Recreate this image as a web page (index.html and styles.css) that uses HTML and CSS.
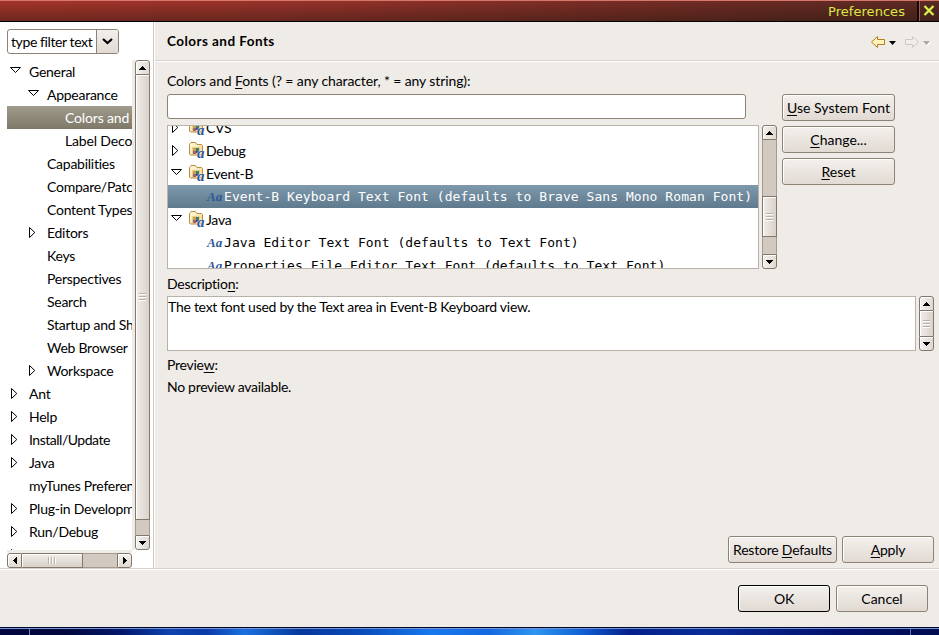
FILE: index.html
```html
<!DOCTYPE html>
<html lang="en">
<head>
<meta charset="utf-8">
<title>Preferences</title>
<link rel="stylesheet" href="styles.css">
</head>
<body>
<svg class="defs" width="0" height="0">
  <defs>
    <symbol id="open" viewBox="0 0 11 7"><path d="M.5 .5H10.5L5.5 5.5Z" fill="#fff" stroke="#000"/></symbol>
    <symbol id="shut" viewBox="0 0 7 11"><path d="M.5 .5V10.5L5.8 5.5Z" fill="#fff" stroke="#000"/></symbol>
    <symbol id="up" viewBox="0 0 7 4"><path d="M3 0h1v1h1v1h1v1h1v1H0V3h1V2h1V1h1z"/></symbol>
    <symbol id="down" viewBox="0 0 7 4"><path d="M3 4h1V3h1V2h1V1h1V0H0v1h1v1h1v1h1z"/></symbol>
    <symbol id="left" viewBox="0 0 4 7"><path d="M0 3v1h1v1h1v1h1v1h1V0H3v1H2v1H1v1z"/></symbol>
    <symbol id="right" viewBox="0 0 4 7"><path d="M4 3v1H3v1H2v1H1v1H0V0h1v1h1v1h1v1z"/></symbol>
    <linearGradient id="gold" x2="1" y2="1"><stop stop-color="#fffbe4"/><stop offset="1" stop-color="#f5d583"/></linearGradient>
    <symbol id="folder" viewBox="0 0 16 16">
      <path d="M.5 12V2.500L2 .5h4.500L8 2.500h4.500l1 1V12l-1 1h-11z" fill="url(#gold)" stroke="#b98b3c"/>
      <path d="M3 5h8v7H3z" fill="#e9cf8e"/>
      <path d="M4 6h3v3H4z" fill="#c9a04e"/><path d="M7 6h3v4H7z" fill="#3d7b78"/><path d="M4 9h3v3H4z" fill="#9b6377"/><path d="M7 9h2v2H7z" fill="#35508c"/>
    </symbol>
  </defs>
</svg>
<div class="window">
  <header class="titlebar"><span class="caption">Preferences</span><span class="close"><svg width="12" height="11" viewBox="0 0 12 11"><path d="M1.500 1L10.500 10M10.500 1L1.500 10" stroke="#dbf24a" stroke-width="2.200"/></svg></span></header>
  <main class="body">
    <aside class="nav">
      <div class="filter"><span>type filter text</span><b><svg width="11" height="7" viewBox="0 0 11 7"><path d="M1 1L5.500 5L10 1" fill="none" stroke="#000" stroke-width="2.200"/></svg></b></div>
      <div class="navgrid">
        <ul class="tree">
          <li class="l0"><i><svg width="11" height="7"><use href="#open"/></svg></i><span>General</span></li>
          <li class="l1"><i><svg width="11" height="7"><use href="#open"/></svg></i><span>Appearance</span></li>
          <li class="l2 current"><i></i><span class="wide">Colors and Fonts</span></li>
          <li class="l2"><i></i><span class="wide">Label Decorations</span></li>
          <li class="l1"><i></i><span>Capabilities</span></li>
          <li class="l1"><i></i><span>Compare/Patch</span></li>
          <li class="l1"><i></i><span>Content Types</span></li>
          <li class="l1"><i class="s"><svg width="7" height="11"><use href="#shut"/></svg></i><span>Editors</span></li>
          <li class="l1"><i></i><span>Keys</span></li>
          <li class="l1"><i></i><span>Perspectives</span></li>
          <li class="l1"><i></i><span>Search</span></li>
          <li class="l1"><i></i><span>Startup and Shutdown</span></li>
          <li class="l1"><i></i><span>Web Browser</span></li>
          <li class="l1"><i class="s"><svg width="7" height="11"><use href="#shut"/></svg></i><span>Workspace</span></li>
          <li class="l0"><i class="s"><svg width="7" height="11"><use href="#shut"/></svg></i><span>Ant</span></li>
          <li class="l0"><i class="s"><svg width="7" height="11"><use href="#shut"/></svg></i><span>Help</span></li>
          <li class="l0"><i class="s"><svg width="7" height="11"><use href="#shut"/></svg></i><span class="tight">Install/Update</span></li>
          <li class="l0"><i class="s"><svg width="7" height="11"><use href="#shut"/></svg></i><span>Java</span></li>
          <li class="l0"><i></i><span>myTunes Preferences</span></li>
          <li class="l0"><i class="s"><svg width="7" height="11"><use href="#shut"/></svg></i><span>Plug-in Development</span></li>
          <li class="l0"><i class="s"><svg width="7" height="11"><use href="#shut"/></svg></i><span>Run/Debug</span></li>
          <li class="l0"><i class="s"><svg width="7" height="11"><use href="#shut"/></svg></i></li>
        </ul>
        <div class="scroll v navv"><b><svg width="7" height="4"><use href="#up"/></svg></b><em class="thumb"><u></u></em><s></s><b><svg width="7" height="4"><use href="#down"/></svg></b></div>
        <div class="scroll h"><b><svg width="4" height="7"><use href="#left"/></svg></b><em class="thumb"><u></u></em><s></s><b><svg width="4" height="7"><use href="#right"/></svg></b></div>
      </div>
    </aside>
    <section class="page">
      <div class="heading"><h1>Colors and Fonts</h1>
        <svg class="arrows" width="61" height="14" viewBox="0 0 61 14">
          <path d="M1.500 7L7.500 1.500V4.500H14.500V9.500H7.500V12.500Z" fill="#fff3b8" stroke="#b87a1c" stroke-linejoin="round"/>
          <path d="M19 6h7l-3.500 4z"/>
          <path d="M48.500 7L42.500 1.500V4.500H35.500V9.500H42.500V12.500Z" fill="#f1eeea" stroke="#ccc8c4" stroke-linejoin="round"/>
          <path d="M54 7h7l-3.500 4z" fill="#fff"/><path d="M53 6h7l-3.500 4z" fill="#aaa6a2"/>
        </svg>
      </div>
      <div class="content">
        <div class="fonts">
          <div class="picker">
            <label class="lab1">Colors and <u>F</u>onts (? = any character, * = any string):</label>
            <div class="input"></div>
            <div class="listrow">
              <ul class="list">
                <li><i class="s"><svg width="7" height="11"><use href="#shut"/></svg></i><span class="fold"><svg width="16" height="16"><use href="#folder"/></svg><b>a</b></span><span>CVS</span></li>
                <li><i class="s"><svg width="7" height="11"><use href="#shut"/></svg></i><span class="fold"><svg width="16" height="16"><use href="#folder"/></svg><b>a</b></span><span>Debug</span></li>
                <li><i><svg width="11" height="7"><use href="#open"/></svg></i><span class="fold"><svg width="16" height="16"><use href="#folder"/></svg><b>a</b></span><span>Event-B</span></li>
                <li class="mono current"><b class="aa">Aa</b><span>Event-B Keyboard Text Font (defaults to Brave Sans Mono Roman Font)</span></li>
                <li><i><svg width="11" height="7"><use href="#open"/></svg></i><span class="fold"><svg width="16" height="16"><use href="#folder"/></svg><b>a</b></span><span>Java</span></li>
                <li class="mono"><b class="aa">Aa</b><span>Java Editor Text Font (defaults to Text Font)</span></li>
                <li class="mono"><b class="aa">Aa</b><span>Properties File Editor Text Font (defaults to Text Font)</span></li>
              </ul>
              <div class="scroll v listv"><b><svg width="7" height="4"><use href="#up"/></svg></b><s class="before"></s><em class="thumb"><u></u></em><s></s><b><svg width="7" height="4"><use href="#down"/></svg></b></div>
            </div>
          </div>
          <div class="side">
            <button class="loose"><span><u>U</u>se System Font</span></button>
            <button class="loose"><span><u>C</u>hange...</span></button>
            <button class="loose"><span><u>R</u>eset</span></button>
          </div>
        </div>
        <label class="lab2">Descriptio<u>n</u>:</label>
        <div class="descrow">
          <div class="desc"><span>The text font used by the Text area in Event-B Keyboard view.</span></div>
          <div class="scroll v"><b><svg width="7" height="4"><use href="#up"/></svg></b><em class="thumb"><u></u></em><b><svg width="7" height="4"><use href="#down"/></svg></b></div>
        </div>
        <label class="lab3">Previe<u>w</u>:</label>
        <p class="none">No preview available.</p>
      </div>
      <div class="actions"><button class="restore"><span>Restore <u>D</u>efaults</span></button><button><span><u>A</u>pply</span></button></div>
    </section>
  </main>
  <footer class="footer"><button class="ok"><span>OK</span></button><button class="loose"><span>Cancel</span></button></footer>
  <div class="desktop"></div>
</div>
</body>
</html>
```
FILE: styles.css
```css
* { box-sizing: border-box; }
body { margin: 0; background: #efebe7; color: #000; font: 14px/23px Lato, "Liberation Sans", sans-serif; letter-spacing: -.26px; }
.defs { position: absolute; }
svg { display: block; }
ul { list-style: none; margin: 0; padding: 0; }
u { text-underline-offset: 2px; }
label, p, h1 { display: block; margin: 0; white-space: nowrap; }
.window { width: 939px; height: 635px; overflow: hidden; display: flex; flex-direction: column; }
.titlebar { height: 22px; flex: none; display: flex; border-top: 1px solid #d5776b; border-bottom: 1px solid #000;
  background: linear-gradient(rgba(0,0,0,0), rgba(20,20,10,.38)), linear-gradient(90deg, #a5342a, #98322a 30%, #6b2a23 80%, #5a2a23); }
.caption { flex: 1; text-align: right; padding-right: 12px; font: 13px/22px "DejaVu Sans", sans-serif; color: #dbe845; letter-spacing: .05px; }
.close { width: 22px; border-left: 2px solid #160805; box-shadow: inset 1px 0 #9b6058; padding: 4px 0 0 4px; }
.body { height: 548px; flex: none; display: flex; border-bottom: 1px solid #fff; box-shadow: inset 0 -1px #d5d0ca; padding-bottom: 1px; }
.nav { width: 153px; background: #fff; padding: 7px 0 0 7px; }
.filter { width: 112px; height: 25px; border: 1px solid #8d8274; border-radius: 3px; display: flex; line-height: 24px; background: #fff; letter-spacing: -.4px; }
.filter span { flex: 1; padding-left: 3px; white-space: nowrap; }
.filter b { width: 22px; flex: none; border-left: 1px solid #8d8274; background: linear-gradient(#f2efec, #e1dad4); display: grid; place-items: center; border-radius: 0 2px 2px 0; }
.navgrid { display: grid; grid-template-columns: 125px 18px; grid-template-rows: 490px 18px; margin-top: 6px; }
.tree { overflow: hidden; }
li { display: flex; height: 23px; white-space: nowrap; line-height: 24px; }
.tree .l1 { padding-left: 18px; }
.tree .l2 { padding-left: 36px; }
.tree .wide { letter-spacing: -.15px; }
.tree .tight { letter-spacing: -.48px; }
.tree i { width: 22px; flex: none; padding: 7px 0 0 3px; }
.tree i.s { padding: 6px 0 0 4px; }
.tree .current { background: linear-gradient(#a09b8c, #7d7868); color: #fff; }
.scroll { display: flex; position: static; }
.scroll b { background: linear-gradient(90deg, #f4f1ee, #e0d9d3); border: 1px solid #82776b; box-shadow: inset 1px 1px #fff; display: grid; place-items: center; flex: none; }
.scroll s { background: #d2c9c1; border: solid #a59a8f; flex: 1; }
.v { flex-direction: column; width: 15px; }
.v b { height: 15px; }
.v b:first-child { border-radius: 3px 3px 0 0; }
.v b:last-child { border-radius: 0 0 3px 3px; }
.v s { border-width: 0 1px; }
.thumb { border: 1px solid #82776b; background: linear-gradient(90deg, #f1edea, #d9d1ca); box-shadow: inset 1px 1px #fff; display: grid; place-items: center; }
.v .thumb { border-width: 0 1px; }
.thumb u { width: 7px; height: 8px; background: repeating-linear-gradient(#b9b0a7 0 1px, #fff 1px 2px, transparent 2px 3px); }
.navv { width: 18px; border-left: 3px solid #efebe7; }
.navv .thumb { height: 445px; border-bottom-width: 1px; }
.h { grid-column: 1; height: 18px; border-top: 3px solid #efebe7; }
.h b { width: 15px; background: linear-gradient(#f4f1ee, #e0d9d3); }
.h b:first-child { border-radius: 3px 0 0 3px; }
.h b:last-child { border-radius: 0 3px 3px 0; }
.h .thumb { width: 61px; border-left: 0; background: linear-gradient(#f1edea, #d9d1ca); }
.h .thumb u { width: 8px; height: 7px; background: repeating-linear-gradient(90deg, #b9b0a7 0 1px, #fff 1px 2px, transparent 2px 3px); }
.h s { border-width: 1px 0; }
.page { flex: 1; border-left: 1px solid #cfcac4; box-shadow: inset 1px 0 #fff; display: flex; flex-direction: column; }
.heading { height: 40px; margin-left: 1px; border-bottom: 1px solid #fff; box-shadow: inset 0 -1px #d5d0ca; display: flex; justify-content: space-between; padding: 8px 8px 0 12px; }
.heading h1 { font: bold 13.500px/23px Lato, sans-serif; letter-spacing: .45px; }
.arrows { margin-top: 5px; }
.content { flex: 1; padding-left: 13px; }
.fonts { display: flex; gap: 5px; height: 207px; }
.picker { width: 610px; }
.lab1 { height: 32px; padding-top: 7px; letter-spacing: -.11px; }
.input { width: 579px; height: 25px; background: #fff; border: 1px solid #8d8274; border-radius: 3px; }
.listrow { display: flex; margin-top: 6px; gap: 3px; }
.list { width: 592px; height: 144px; overflow: hidden; background: #fff; border: 1px solid #b9b2a8; }
.list li:first-child { margin-top: -10px; }
.list i { width: 21px; flex: none; padding: 7px 0 0 3px; }
.list i.s { padding: 6px 0 0 4px; }
.list li { line-height: 24px; }
.fold { position: relative; width: 17px; flex: none; padding-top: 3px; }
.fold b { position: absolute; left: 8px; top: 7px; font: italic bold 15px/15px "Liberation Serif", serif; color: #2c5796; letter-spacing: 0; text-shadow: 0 0 1px #fff, 0 0 1px #fff; }
.list .mono { font: 13px/23px "DejaVu Sans Mono", monospace; letter-spacing: .055px; padding-left: 39px; }
.list .current { color: #fff; background: linear-gradient(#7e99ac, #5f7a8d); }
.aa { width: 17px; flex: none; font: italic bold 13px/23px "Liberation Serif", serif; color: #2c5796; letter-spacing: 0; }
.listv .before { flex: 0 0 56px; }
.listv .thumb { height: 41px; border-width: 1px; }
.side { padding-top: 32px; display: flex; flex-direction: column; gap: 5px; }
button { width: 113px; height: 27px; padding: 0; border: 1px solid #8d8274; border-radius: 3px; background: linear-gradient(#f3f0ed, #e1dad3); box-shadow: inset 1px 1px #fff; font: 14px/25px Lato, sans-serif; letter-spacing: -.22px; color: #000; white-space: nowrap; }
button.loose { letter-spacing: 0; }
.lab2 { height: 27px; padding-top: 3px; }
.descrow { display: flex; gap: 3px; height: 55px; }
.desc { width: 749px; background: #fff; border: 1px solid #b9b2a8; line-height: 19px; white-space: nowrap; }
.descrow .thumb { flex: 1; }
.lab3 { padding-top: 2px; }
.none { margin-top: -1px; letter-spacing: -.3px; }
.actions { display: flex; gap: 5px; padding: 0 5px 5px 574px; }
.actions button { width: 92px; }
.actions .restore { width: 109px; }
.footer { height: 57px; flex: none; display: flex; gap: 6px; padding: 15px 0 0 738px; }
.footer button { width: 92px; }
.footer .ok { border-color: #000; }
.desktop { height: 8px; flex: none; border-top: 1px solid #00062e; box-shadow: inset 0 1px #7595d0;
  background: linear-gradient(90deg, transparent 29px, #7780aa 29px 30px, transparent 30px 910px, #6670a8 910px 911px, transparent 911px), linear-gradient(90deg, #000640, #00083c 7%, #04176b 13%, #0e43b0 18%, #0a3ba8 22%, #1b70e0 26%, #07389c 32%, #0a49b8 38%, #1878ee 46%, #1469df 52%, #2f95f0 57%, #1160d5 62%, #05208a 67%, #0a2c98 75%, #02106a 90%, #000c50); }
```
